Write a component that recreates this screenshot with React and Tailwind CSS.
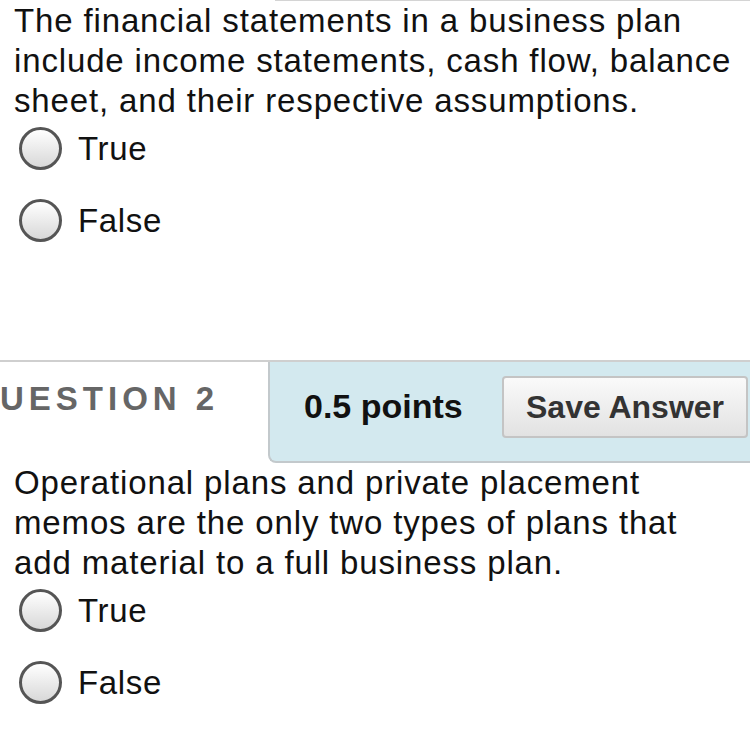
import React from "react";

const font = { fontFamily: '"Liberation Sans", Arial, sans-serif' };

function Radio({ label }) {
  return (
    <label className="flex h-[72px] items-center gap-[16px] pl-[19px]">
      <span className="h-[43px] w-[43px] shrink-0 rounded-full border-[3px] border-[#555] bg-gradient-to-b from-white to-[#d8d8d8]" />
      <span className="text-[33px] leading-none tracking-[0.02em] text-[#111]">{label}</span>
    </label>
  );
}

function Question({ text }) {
  return (
    <div>
      <p className="pl-[14px] pr-[12px] text-[33px] leading-[40px] tracking-[0.026em] text-[#111]">{text}</p>
      <div className="-mt-[9px]">
        <Radio label="True" />
        <Radio label="False" />
      </div>
    </div>
  );
}

export default function App() {
  return (
    <div className="h-[750px] w-[750px] overflow-hidden bg-white" style={font}>
      <div className="ml-[275px] h-px bg-[#d4d4d4]" />
      <Question text="The financial statements in a business plan include income statements, cash flow, balance sheet, and their respective assumptions." />
      <div className="h-[104px]" />
      <div className="h-[2px] bg-[#cfcfcf]" />
      <div className="flex h-[101px]">
        <div className="w-[268px] shrink-0 pt-[12px]">
          <span className="block whitespace-nowrap text-[33px] font-bold tracking-[5px] text-[#666]">
            UESTION 2
          </span>
        </div>
        <div className="flex flex-1 items-center rounded-bl-[8px] border-b-2 border-l-2 border-[#c3c9cc] bg-[#d3e9ef] pb-[10px]">
          <span className="ml-[34px] text-[34px] font-bold text-[#111]">0.5 points</span>
          <button
            type="button"
            className="ml-auto mr-[2px] h-[62px] w-[246px] rounded-[4px] border-2 border-[#c4c4c4] bg-gradient-to-b from-[#fafafa] to-[#e2e2e2] text-[32px] font-bold text-[#333]"
          >
            Save Answer
          </button>
        </div>
      </div>
      <Question text="Operational plans and private placement memos are the only two types of plans that add material to a full business plan." />
    </div>
  );
}
